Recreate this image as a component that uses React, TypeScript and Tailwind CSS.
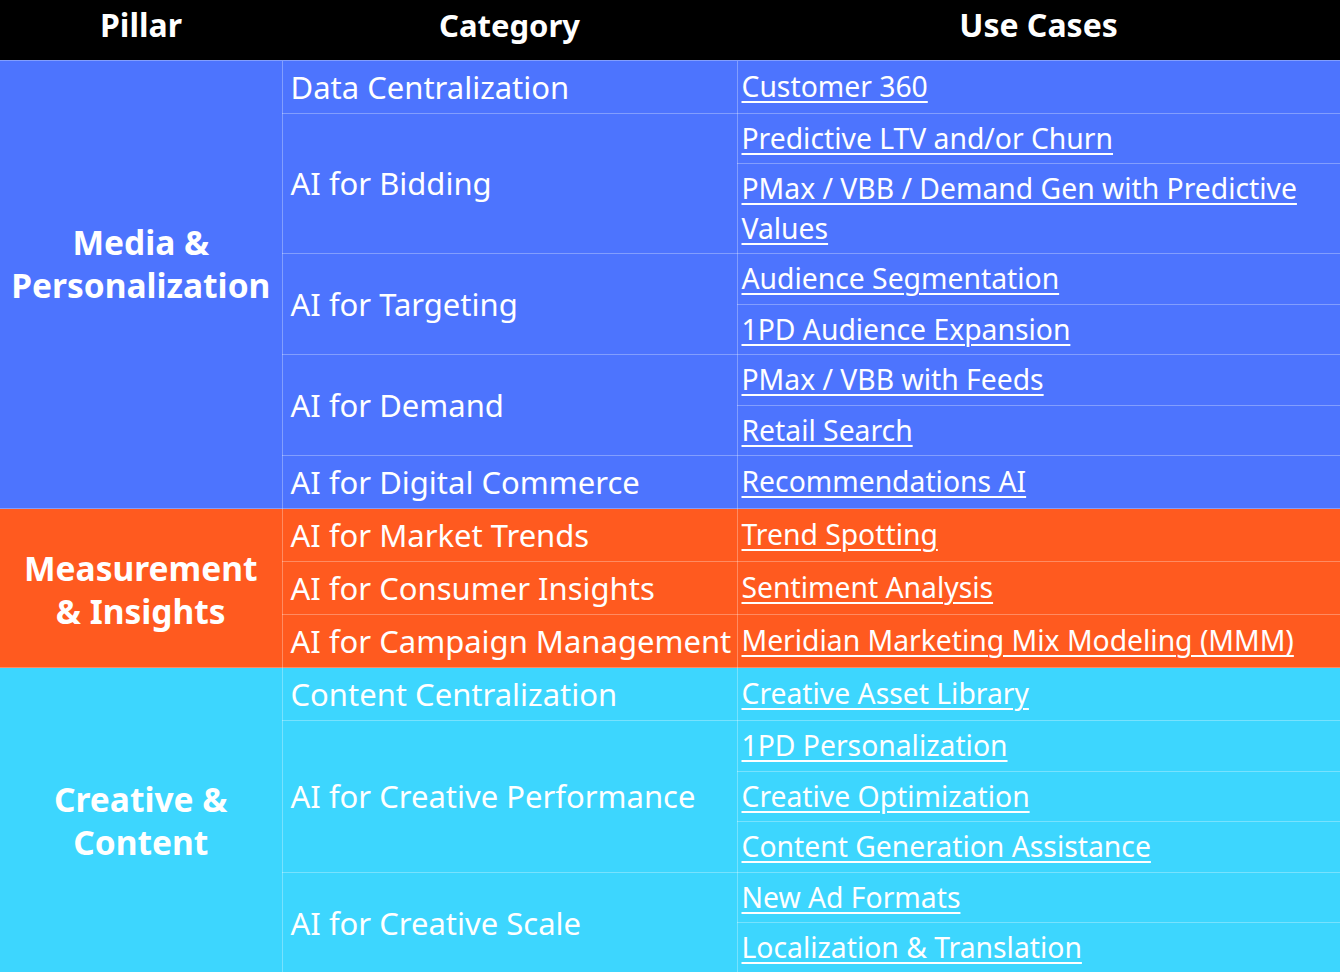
import React from "react";

type Group = { category: string; cases: string[] };
type Pillar = { name: string[]; bg: string; shift: string; groups: Group[] };

const pillars: Pillar[] = [
  {
    name: ["Media &", "Personalization"],
    bg: "bg-[#4d74fe]",
    shift: "pb-[40px]",
    groups: [
      { category: "Data Centralization", cases: ["Customer 360"] },
      {
        category: "AI for Bidding",
        cases: ["Predictive LTV and/or Churn", "PMax / VBB / Demand Gen with Predictive Values"],
      },
      { category: "AI for Targeting", cases: ["Audience Segmentation", "1PD Audience Expansion"] },
      { category: "AI for Demand", cases: ["PMax / VBB with Feeds", "Retail Search"] },
      { category: "AI for Digital Commerce", cases: ["Recommendations AI"] },
    ],
  },
  {
    name: ["Measurement", "& Insights"],
    bg: "bg-[#ff5a1f]",
    shift: "pt-[4px]",
    groups: [
      { category: "AI for Market Trends", cases: ["Trend Spotting"] },
      { category: "AI for Consumer Insights", cases: ["Sentiment Analysis"] },
      { category: "AI for Campaign Management", cases: ["Meridian Marketing Mix Modeling (MMM)"] },
    ],
  },
  {
    name: ["Creative &", "Content"],
    bg: "bg-[#3dd6fe]",
    shift: "pt-[2px]",
    groups: [
      { category: "Content Centralization", cases: ["Creative Asset Library"] },
      {
        category: "AI for Creative Performance",
        cases: ["1PD Personalization", "Creative Optimization", "Content Generation Assistance"],
      },
      { category: "AI for Creative Scale", cases: ["New Ad Formats", "Localization & Translation"] },
    ],
  },
];

const cellBorder = "border border-white/30";

const App = () => {
  return (
    <div className="w-[1340px] h-[972px] overflow-hidden bg-[#3dd6fe] font-['Noto_Sans',sans-serif] text-white">
      <table className="w-[1340px] table-fixed border-collapse">
        <colgroup>
          <col className="w-[282px]" />
          <col className="w-[455px]" />
          <col className="w-[603px]" />
        </colgroup>
        <thead>
          <tr className="bg-black h-[60px]">
            <th className="text-[32px] font-bold text-center align-middle pb-[10px] border-b border-white/30">Pillar</th>
            <th className="text-[31px] font-bold text-center align-middle pb-[10px] border-b border-white/30">Category</th>
            <th className="text-[32px] font-bold text-center align-middle pb-[10px] border-b border-white/30">Use Cases</th>
          </tr>
        </thead>
        <tbody>
          {pillars.map((p) => {
            const total = p.groups.reduce((n, g) => n + g.cases.length, 0);
            let first = true;
            return p.groups.map((g) =>
              g.cases.map((c, ci) => {
                const showPillar = first;
                first = false;
                return (
                  <tr key={p.name.join() + g.category + c} className={p.bg}>
                    {showPillar && (
                      <td
                        rowSpan={total}
                        className={`${cellBorder} ${p.shift} border-l-0 text-center align-middle font-bold text-[33.5px] leading-[43px]`}
                      >
                        {p.name.map((line) => (
                          <div key={line}>{line}</div>
                        ))}
                      </td>
                    )}
                    {ci === 0 && (
                      <td
                        rowSpan={g.cases.length}
                        className={`${cellBorder} align-middle pl-[8px] py-[6px] text-[31px] leading-[40px] whitespace-nowrap`}
                      >
                        {g.category}
                      </td>
                    )}
                    <td className={`${cellBorder} border-r-0 align-middle pl-[4px] pr-[20px] py-[5px] text-[28.3px] leading-[39.5px]`}>
                      <a href="#" className="underline underline-offset-[4px] decoration-[2px]">
                        {c}
                      </a>
                    </td>
                  </tr>
                );
              })
            );
          })}
        </tbody>
      </table>
    </div>
  );
};

export default App;
